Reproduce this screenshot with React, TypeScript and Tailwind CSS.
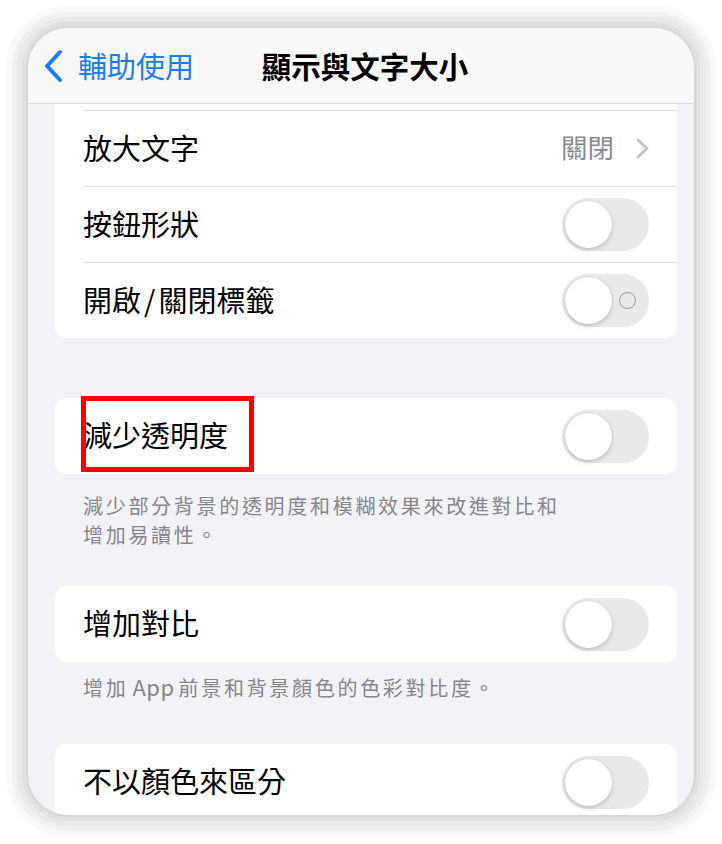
import React from "react";

const FONT = { fontFamily: '"Noto Sans CJK TC", "Noto Sans", sans-serif' };

function Toggle({ label = false }: { label?: boolean }) {
  return (
    <div className="relative w-[87px] h-[53px] rounded-full bg-[#e9e9eb] shrink-0">
      <div className="absolute left-[3px] top-[3px] w-[47px] h-[47px] rounded-full bg-white shadow-[0_2px_5px_rgba(0,0,0,0.18),0_0_0_0.5px_rgba(0,0,0,0.06)]" />
      {label && (
        <div className="absolute left-[57px] top-[18px] w-[17px] h-[17px] rounded-full border-[1.5px] border-[#9a9a9e]" />
      )}
    </div>
  );
}

function Row({
  children,
  right,
  border = true,
}: {
  children: React.ReactNode;
  right?: React.ReactNode;
  border?: boolean;
}) {
  return (
    <div className="pl-[28px]">
      <div
        className={
          "h-[76px] flex items-center justify-between pr-[28px] " +
          (border ? "border-t border-[#e0e0e3]" : "")
        }
      >
        <span className="text-[29px] text-black leading-none -mt-[3px]">{children}</span>
        {right}
      </div>
    </div>
  );
}

export default function App() {
  return (
    <div className="w-[722px] h-[844px] bg-white pl-[28px] pt-[28px]" style={FONT}>
      <div className="w-[666px] h-[787px] rounded-[40px] overflow-hidden bg-[#f2f2f7] flex flex-col shadow-[0_0_0_2px_#d6d6d6,0_0_0_6px_#e0e0e0,0_0_0_11px_#e9e9e9,0_0_0_16px_#f0f0f0,0_0_0_22px_#f8f8f8]">
        {/* Nav bar */}
        <div className="h-[76px] shrink-0 bg-[#f8f8f8] border-b border-[#d9d9dc] flex items-center relative">
          <div className="flex items-center pl-[14px] gap-[14px] text-[#1a7cf6]">
            <svg width="22" height="34" viewBox="0 0 22 34" fill="none">
              <path
                d="M18 3 L5 17 L18 31"
                stroke="#1a7cf6"
                strokeWidth="4"
                strokeLinecap="round"
                strokeLinejoin="round"
              />
            </svg>
            <span className="text-[29px] leading-none">輔助使用</span>
          </div>
          <div className="absolute left-0 right-0 top-0 bottom-0 flex items-center justify-center pointer-events-none">
            <span className="text-[29.5px] font-semibold text-black leading-none ml-[8px]">
              顯示與文字大小
            </span>
          </div>
        </div>

        {/* Content */}
        <div className="flex-1 pl-[27px] pr-[17px] flex flex-col">
          <div className="bg-white rounded-b-[12px] pt-[6px]">
            <Row
              right={
                <div className="flex items-center gap-[22px]">
                  <span className="text-[26.5px] text-[#8a8a8e] leading-none -mt-[3px]">關閉</span>
                  <svg width="13" height="21" viewBox="0 0 13 21" fill="none">
                    <path
                      d="M2 2 L11 10.5 L2 19"
                      stroke="#c4c4c7"
                      strokeWidth="2.8"
                      strokeLinecap="round"
                      strokeLinejoin="round"
                    />
                  </svg>
                </div>
              }
            >
              放大文字
            </Row>
            <Row right={<Toggle />}>按鈕形狀</Row>
            <Row right={<Toggle label />}>
              開啟<span className="mx-[3px]">/</span>關閉標籤
            </Row>
          </div>

          <div className="relative mt-[60px] bg-white rounded-[12px]">
            <Row border={false} right={<Toggle />}>
              減少透明度
            </Row>
            <div className="absolute left-[26px] top-[-2px] w-[173px] h-[76px] border-[5px] border-[#ff0000]" />
          </div>
          <div className="pl-[28px] pr-[28px] pt-[17px] text-[20px] tracking-[2.7px] leading-[29px] text-[#86868b]">
            <div>減少部分背景的透明度和模糊效果來改進對比和</div>
            <div>增加易讀性。</div>
          </div>

          <div className="mt-[37px] bg-white rounded-[12px]">
            <Row border={false} right={<Toggle />}>
              增加對比
            </Row>
          </div>
          <div className="pl-[28px] pr-[28px] pt-[10px] text-[20px] tracking-[2.7px] leading-[29px] text-[#86868b]">
            增加
            <span className="text-[22px] tracking-[0.5px] mx-[4px]">App</span>
            前景和背景顏色的色彩對比度。
          </div>

          <div className="mt-[42px] bg-white rounded-[12px]">
            <Row border={false} right={<Toggle />}>
              不以顏色來區分
            </Row>
          </div>
        </div>
      </div>
    </div>
  );
}
